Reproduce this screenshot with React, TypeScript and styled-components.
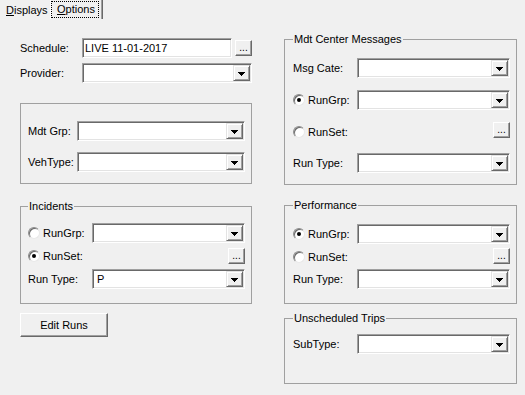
import React from 'react';
import styled, { createGlobalStyle } from 'styled-components';

const GlobalStyle = createGlobalStyle`
  html, body {
    margin: 0;
    padding: 0;
    background: #f0f0f0;
  }
  body {
    font-family: "Liberation Sans", Arial, sans-serif;
    font-size: 11px;
    color: #000;
  }
`;

const Window = styled.div`
  width: 525px;
  height: 395px;
  overflow: hidden;
  background: #f0f0f0;
  display: flex;
  flex-direction: column;
`;

const TabStrip = styled.div`
  height: 19px;
  display: flex;
  align-items: stretch;
  padding-left: 2px;
`;

const Tab = styled.div<{ $active?: boolean; $w: number }>`
  width: ${p => p.$w}px;
  box-sizing: border-box;
  display: flex;
  align-items: center;
  padding-left: ${p => (p.$active ? 0 : 4)}px;
  ${p =>
    p.$active &&
    `
    border-left: 1px solid #fff;
    border-right: 1px solid #696969;
    box-shadow: inset -1px 0 #a0a0a0;
  `}
`;

const TabText = styled.span<{ $focus?: boolean }>`
  line-height: 13px;
  padding: 1px 3px 1px 5px;
  border: 1px dotted ${p => (p.$focus ? '#000' : 'transparent')};
`;

const Page = styled.div`
  flex: 1;
  display: flex;
  gap: 32px;
  padding: 14px 0 0 20px;
`;

const Column = styled.div<{ $w: number; $top: number }>`
  width: ${p => p.$w}px;
  padding-top: ${p => p.$top}px;
  display: flex;
  flex-direction: column;
`;

const Row = styled.div<{ $label: number; $h?: number; $mt?: number }>`
  display: flex;
  align-items: center;
  height: ${p => p.$h ?? 20}px;
  margin-top: ${p => p.$mt ?? 0}px;
  & > label {
    width: ${p => p.$label}px;
    flex: none;
    display: flex;
    align-items: center;
  }
`;

const PlainBox = styled.div<{ $mt: number }>`
  margin-top: ${p => p.$mt}px;
  border: 1px solid #a0a0a0;
  padding: 17px 6px 11px 7px;
  display: flex;
  flex-direction: column;
  gap: 11px;
`;

const Group = styled.fieldset<{ $mt?: number; $pad: string; $left: number; $gap: number }>`
  margin: ${p => p.$mt ?? 0}px 0 0 0;
  min-inline-size: 0;
  border: 1px solid #a0a0a0;
  padding: ${p => p.$pad};
  padding-left: ${p => p.$left}px;
  padding-right: 6px;
  display: flex;
  flex-direction: column;
  gap: ${p => p.$gap}px;

  & > legend {
    padding: 0 1px;
    margin-left: 0;
    line-height: 13px;
  }
`;

const Field = styled.div`
  flex: 1;
  height: 20px;
  box-sizing: border-box;
  background: #fff;
  border: 1px solid;
  border-color: #a0a0a0 #fff #fff #a0a0a0;
  box-shadow: inset 1px 1px #696969, inset -1px -1px #e3e3e3;
  padding: 1px;
  display: flex;
  align-items: stretch;
`;

const FieldText = styled.span<{ $pl?: number }>`
  flex: 1;
  display: flex;
  align-items: center;
  padding-left: ${p => p.$pl ?? 3}px;
`;

const DropButton = styled.span`
  width: 17px;
  box-sizing: border-box;
  background: #f0f0f0;
  border: 1px solid;
  border-color: #e3e3e3 #696969 #696969 #e3e3e3;
  box-shadow: inset 1px 1px #fff, inset -1px -1px #a0a0a0;
  display: flex;
  align-items: center;
  justify-content: center;
  padding-top: 1px;
`;

const SmallButton = styled.button`
  width: 17px;
  height: 16px;
  margin-left: auto;
  align-self: flex-start;
  padding: 0 0 2px;
  box-sizing: border-box;
  background: #f0f0f0;
  border: 1px solid;
  border-color: #fff #696969 #696969 #fff;
  box-shadow: inset -1px -1px #a0a0a0;
  font: inherit;
  font-size: 10px;
  line-height: 1;
  display: flex;
  align-items: flex-end;
  justify-content: center;
  color: #000;
`;

const PushButton = styled.button<{ $mt: number }>`
  margin-top: ${p => p.$mt}px;
  width: 88px;
  height: 24px;
  box-sizing: border-box;
  background: #f0f0f0;
  border: 1px solid;
  border-color: #fff #696969 #696969 #fff;
  box-shadow: inset -1px -1px #a0a0a0;
  font: inherit;
  color: #000;
  padding: 0;
`;

const RadioMark = styled.span<{ $checked?: boolean }>`
  width: 12px;
  height: 12px;
  box-sizing: border-box;
  border-radius: 50%;
  background: #fff;
  border: 1px solid;
  border-color: #8c8c8c #e8e8e8 #e8e8e8 #8c8c8c;
  box-shadow: inset 1px 1px #696969;
  margin-right: 3px;
  display: flex;
  align-items: center;
  justify-content: center;

  &::after {
    content: '';
    width: 4px;
    height: 4px;
    border-radius: 50%;
    background: ${p => (p.$checked ? '#000' : 'transparent')};
  }
`;

const Arrow = () => (
  <svg width="7" height="4" viewBox="0 0 7 4" shapeRendering="crispEdges">
    <rect x="0" y="0" width="7" height="1" />
    <rect x="1" y="1" width="5" height="1" />
    <rect x="2" y="2" width="3" height="1" />
    <rect x="3" y="3" width="1" height="1" />
  </svg>
);

const Combo = ({ value }: { value?: string }) => (
  <Field>
    <FieldText>{value}</FieldText>
    <DropButton>
      <Arrow />
    </DropButton>
  </Field>
);

const Radio = ({ text, checked }: { text: string; checked?: boolean }) => (
  <label>
    <RadioMark $checked={checked} />
    {text}
  </label>
);

export default function App() {
  return (
    <Window>
      <GlobalStyle />
      <TabStrip>
        <Tab $w={48}>
          <span>
            <u>D</u>isplays
          </span>
        </Tab>
        <Tab $w={53} $active>
          <TabText $focus>
            <u>O</u>ptions
          </TabText>
        </Tab>
      </TabStrip>

      <Page>
        <Column $w={232} $top={5}>
          <Row $label={62}>
            <label>Schedule:</label>
            <Field>
              <FieldText $pl={1}>LIVE 11-01-2017</FieldText>
            </Field>
            <SmallButton style={{ marginLeft: 3, alignSelf: 'center' }}>...</SmallButton>
          </Row>
          <Row $label={62} $mt={5}>
            <label>Provider:</label>
            <Combo />
          </Row>

          <PlainBox $mt={20}>
            <Row $label={49}>
              <label>Mdt Grp:</label>
              <Combo />
            </Row>
            <Row $label={49}>
              <label>VehType:</label>
              <Combo />
            </Row>
          </PlainBox>

          <Group $mt={16} $pad="10px 6px 14px" $left={7} $gap={5}>
            <legend>Incidents</legend>
            <Row $label={64}>
              <Radio text="RunGrp:" />
              <Combo />
            </Row>
            <Row $label={64} $h={16}>
              <Radio text="RunSet:" checked />
              <SmallButton>...</SmallButton>
            </Row>
            <Row $label={64}>
              <label>Run Type:</label>
              <Combo value="P" />
            </Row>
          </Group>

          <PushButton $mt={9}>Edit Runs</PushButton>
        </Column>

        <Column $w={233} $top={0}>
          <Group $pad="12px 6px 11px" $left={8} $gap={12}>
            <legend>Mdt Center Messages</legend>
            <Row $label={64}>
              <label>Msg Cate:</label>
              <Combo />
            </Row>
            <Row $label={64}>
              <Radio text="RunGrp:" checked />
              <Combo />
            </Row>
            <Row $label={64} $h={19}>
              <Radio text="RunSet:" />
              <SmallButton>...</SmallButton>
            </Row>
            <Row $label={64}>
              <label>Run Type:</label>
              <Combo />
            </Row>
          </Group>

          <Group $mt={14} $pad="12px 6px 14px" $left={8} $gap={4}>
            <legend>Performance</legend>
            <Row $label={64}>
              <Radio text="RunGrp:" checked />
              <Combo />
            </Row>
            <Row $label={64} $h={17}>
              <Radio text="RunSet:" />
              <SmallButton>...</SmallButton>
            </Row>
            <Row $label={64}>
              <label>Run Type:</label>
              <Combo />
            </Row>
          </Group>

          <Group $mt={8} $pad="9px 6px 29px" $left={8} $gap={0}>
            <legend>Unscheduled Trips</legend>
            <Row $label={64}>
              <label>SubType:</label>
              <Combo />
            </Row>
          </Group>
        </Column>
      </Page>
    </Window>
  );
}
